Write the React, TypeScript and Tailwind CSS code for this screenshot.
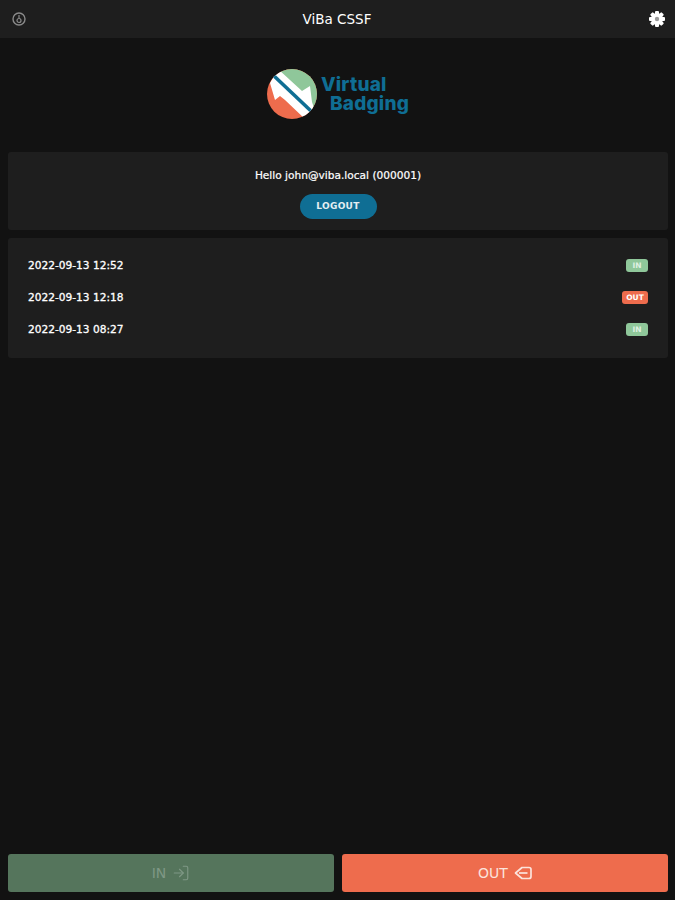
import { LogIn } from "lucide-react"

const records = [
  { time: "2022-09-13 12:52", type: "IN" },
  { time: "2022-09-13 12:18", type: "OUT" },
  { time: "2022-09-13 08:27", type: "IN" },
]

function LogoMark() {
  return (
    <svg width="50" height="50" viewBox="0 0 50 50">
      <defs>
        <clipPath id="logo-circle">
          <circle cx="25" cy="25" r="25" />
        </clipPath>
      </defs>
      <g clipPath="url(#logo-circle)">
        <rect width="50" height="50" fill="#ee6c4d" />
        <polygon points="10,0 52,0 52,40 44,40" fill="#8fc79a" />
        <polygon points="11,0 35,22 43,17 45,33 47,39 38,50 18,31 13,27 8,31 3,14" fill="#fff" />
        <line x1="6" y1="6" x2="44" y2="42" stroke="#0f6e94" strokeWidth="3.6" />
      </g>
    </svg>
  )
}

function SmallClock() {
  return (
    <svg width="14" height="16" viewBox="0 0 14 16" fill="none" stroke="#8a8a8a">
      <circle cx="7" cy="8" r="6" strokeWidth="1.4" />
      <circle cx="7" cy="9.5" r="2" strokeWidth="1.2" />
      <path d="M7 4v3" strokeWidth="1.2" />
    </svg>
  )
}

function Gear() {
  return (
    <svg width="18" height="18" viewBox="0 0 18 18">
      {[0, 45, 90, 135].map((deg) => (
        <rect key={deg} x="7" y="1" width="4" height="16" rx="1" fill="#fff" transform={`rotate(${deg} 9 9)`} />
      ))}
      <circle cx="9" cy="9" r="6" fill="#fff" />
      <circle cx="9" cy="9" r="2.2" fill="#9a9a9a" />
    </svg>
  )
}

function OutIcon() {
  return (
    <svg width="18" height="14" viewBox="0 0 18 14" fill="none" stroke="currentColor" strokeWidth="1.7" strokeLinejoin="round">
      <path d="M8 1.5h7a2 2 0 0 1 2 2v7a2 2 0 0 1-2 2H8L1.5 7z" />
      <path d="M5 7h8.5" />
    </svg>
  )
}

export default function App() {
  return (
    <div className="flex h-[900px] flex-col bg-[#121212] font-['DejaVu_Sans',sans-serif] text-white">
      <header className="flex h-[38px] items-center justify-between bg-[#1e1e1e] pl-3 pr-[9px]">
        <SmallClock />
        <h1 className="text-[13.5px]">ViBa CSSF</h1>
        <Gear />
      </header>

      <div className="flex h-[114px] items-center justify-center pb-[2px] pl-[1px]">
        <LogoMark />
        <div className="ml-[4px] font-['Inter',sans-serif] text-[19px] font-extrabold leading-[19px] tracking-[0.2px] text-[#0f6e94]">
          <div>Virtual</div>
          <div className="pl-[9px]">Badging</div>
        </div>
      </div>

      <section className="ml-2 mr-[7px] flex h-[78px] flex-col items-center rounded-[3px] bg-[#1e1e1e] pt-[17px]">
        <p className="text-[10.6px] leading-[13px] [-webkit-text-stroke:0.2px_white]">Hello john@viba.local (000001)</p>
        <button className="mt-[12px] h-[25px] w-[77px] rounded-full bg-[#0f6e94] text-[9px] font-bold tracking-[0.3px] text-[#e4eef2]">
          LOGOUT
        </button>
      </section>

      <section className="ml-2 mr-[7px] mt-2 flex h-[120px] flex-col gap-[19px] rounded-[3px] bg-[#1e1e1e] px-5 pt-[21px]">
        {records.map((r) => (
          <div key={r.time} className="flex h-[13px] items-center justify-between">
            <span className="text-[10.6px] [-webkit-text-stroke:0.3px_white]">{r.time}</span>
            <span
              className={
                r.type === "IN"
                  ? "w-[22px] rounded-[3px] bg-[#8fc79a] text-center text-[7.5px] font-bold leading-[13px] text-[#dff0e2]"
                  : "w-[26px] rounded-[3px] bg-[#ee6c4d] text-center text-[7.5px] font-bold leading-[13px]"
              }
            >
              {r.type}
            </span>
          </div>
        ))}
      </section>

      <footer className="mt-auto flex gap-2 pb-2 pl-2 pr-[7px]">
        <button className="flex h-[38px] flex-1 items-center justify-center gap-[6px] rounded-[3px] bg-[#55755c] text-[14px] text-[#7f9885]">
          IN
          <LogIn size={18} strokeWidth={1.5} />
        </button>
        <button className="flex h-[38px] flex-1 items-center justify-center gap-[6px] rounded-[3px] bg-[#ee6c4d] text-[14px] text-[#fbe3dc]">
          OUT
          <OutIcon />
        </button>
      </footer>
    </div>
  )
}
